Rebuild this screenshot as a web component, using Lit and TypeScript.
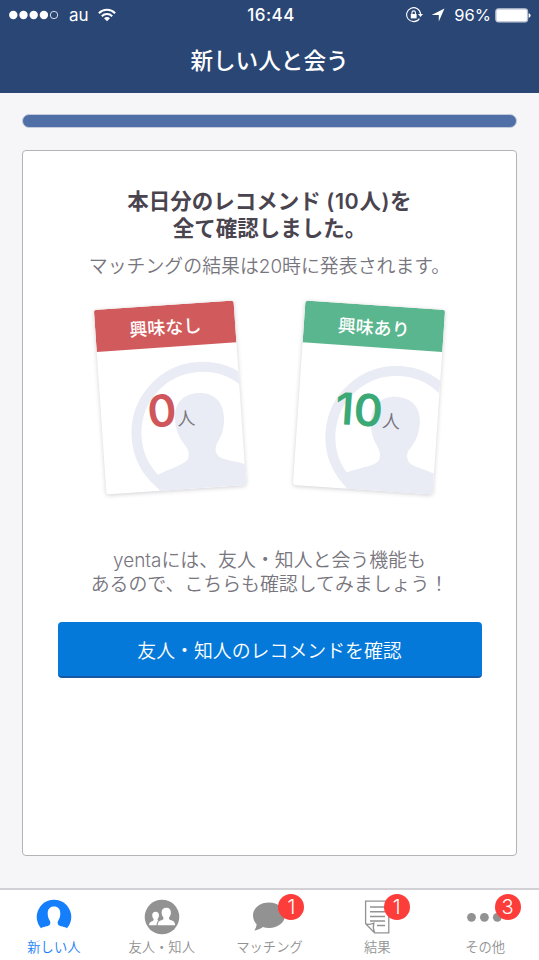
import { LitElement, html, css, svg } from "lit";
import { customElement, property } from "lit/decorators.js";

const SANS = css`Inter, "Noto Sans CJK JP", sans-serif`;

@customElement("status-bar")
class StatusBar extends LitElement {
  static styles = css`
    :host { display: flex; height: 30px; padding: 0 8px 0 9px; align-items: center; justify-content: space-between; color: #fff; font: 400 16.5px ${SANS}; box-sizing: border-box; }
    .side { display: flex; align-items: center; flex: 1; }
    .right { justify-content: flex-end; }
    .time { font-weight: 500; font-size: 17px; letter-spacing: 0.5px; padding-left: 2px; }
    .carrier { margin: 0 9px 0 10px; font-size: 17px; }
    .percent { margin: 0 4px 0 9px; }
    .arrow { margin-left: 8px; }
    svg { display: block; }
  `;
  render() {
    return html`
      <div class="side">
        <svg width="50" height="10" fill="#fff">
          ${[0, 1, 2, 3].map((i) => svg`<circle cx=${4.3 + i * 10.2} cy="5" r="4.2"/>`)}
          <circle cx="45" cy="5" r="3.7" fill="none" stroke="#fff" stroke-width=".8" />
        </svg>
        <span class="carrier">au</span>
        <svg width="18" height="14" viewBox="0 0 18 14" fill="none" stroke="#fff" stroke-width="2">
          <path d="M.9 5.2a11.4 11.4 0 0 1 16.2 0M3.8 8.2a7.3 7.3 0 0 1 10.4 0" />
          <path d="M9 13.2 6 10.2a4.2 4.2 0 0 1 6 0Z" fill="#fff" stroke="none" />
        </svg>
      </div>
      <span class="time">16:44</span>
      <div class="side right">
        <svg width="17" height="16" viewBox="0 0 17 16" fill="none" stroke="#fff" stroke-width="1.1">
          <path d="M13.4 11.6A7 7 0 1 1 14.6 7" />
          <path d="M12 7h5l-2.5 3Z" fill="#fff" stroke="none" />
          <path d="M4.8 7h5.8v4.4H4.8Z" fill="#fff" stroke="none" />
          <path d="M6 7.2V5.6a1.7 1.7 0 0 1 3.4 0v1.6" />
        </svg>
        <svg class="arrow" width="14" height="14" viewBox="0 0 14 14" fill="#fff"><path d="M13.5.5 7.8 13.4V6.9H.6Z" /></svg>
        <span class="percent">96%</span>
        <svg width="36" height="15" viewBox="0 0 36 15">
          <rect x=".7" y=".7" width="32" height="13.4" rx="2.4" fill="#9dabc5" stroke="#e6eaf1" stroke-width=".7" />
          <rect x="1.5" y="1.6" width="30.4" height="11.6" rx="1.6" fill="#fff" />
          <path d="M33.6 5.2q2 .5 2 2.3t-2 2.3Z" fill="#fff" />
        </svg>
      </div>
    `;
  }
}

@customElement("result-card")
class ResultCard extends LitElement {
  @property() label = "";
  @property() count = "";
  static styles = css`
    :host { display: block; width: 140px; height: 185px; border-radius: 3px; background: #fff; overflow: hidden; box-shadow: 0 1px 4px rgba(60, 60, 80, 0.24); font-family: ${SANS}; position: relative; --accent: #d15b5c; --number: #cf565b; transform: rotate(-3.9deg); }
    :host([positive]) { --accent: #5ab68e; --number: #3aa976; transform: rotate(3.9deg); }
    .head { display: flex; align-items: center; justify-content: center; height: 42px; background: var(--accent); color: #fff; font-size: 18px; font-weight: 500; }
    .figure { position: absolute; inset: 42px 0 0 0; }
    .total { position: relative; display: flex; align-items: baseline; justify-content: center; line-height: 50px; margin-top: 38px; }
    .number { color: var(--number); font-size: 44px; font-weight: 600; }
    .unit { color: #77757d; font-size: 18px; font-weight: 350; }
  `;
  render() {
    return html`
      <div class="head">${this.label}</div>
      <svg class="figure" width="140" height="143" viewBox="0 42 140 143" fill="#e9ecf5">
        <circle cx="100" cy="130" r="66" fill="none" stroke="#e9ecf5" stroke-width="10" />
        <path d="M98 90c15 0 24.500 9 24.500 25 0 14-5 21-9.500 28-2 4-1 9 2 12 6 5 22 6 32 12V200H58L49 171c11-7 28-9 34-15 3-4 2-9 0-13-4.500-7-9.500-14-9.500-28 0-16 9.500-25 24.500-25Z" />
      </svg>
      <div class="total"><span class="number">${this.count}</span><span class="unit">人</span></div>
    `;
  }
}

@customElement("tab-item")
class TabItem extends LitElement {
  @property() label = "";
  @property() icon = "";
  @property() badge = "";
  static styles = css`
    :host { display: flex; flex-direction: column; align-items: center; color: #929292; font: 400 13.3px ${SANS}; padding-top: 8.5px; }
    :host([active]) { color: #157efb; }
    .icon { position: relative; width: 36px; height: 36px; }
    svg { display: block; }
    .label { line-height: 20px; margin-top: 2px; font-weight: 350; white-space: nowrap; }
    .badge { position: absolute; left: 27px; top: -5px; width: 26px; height: 26px; border-radius: 50%; background: #fc3d39; color: #fff; font-size: 20px; font-weight: 300; line-height: 26px; text-align: center; }
    :host([icon="result"]) .badge { left: 24.500px; }
    :host([icon="more"]) .badge { left: 27.500px; }
  `;
  glyph() {
    switch (this.icon) {
      case "person":
        return svg`<circle cx="18" cy="18" r="17.3" fill="currentColor"/>
          <path fill="#fff" d="M18 7.600c4 0 6.300 2.700 6.300 6.900 0 3.500-1 5.400-2.100 7.200-.8 1.500-.8 3.200.2 4.200 1.700 1.500 6.500 1.600 9 3.400a16.400 16.400 0 0 1-26.800 0c2.500-1.800 7.300-1.900 9-3.400 1-1 1-2.700.2-4.200-1.100-1.800-2.100-3.700-2.100-7.200 0-4.200 2.300-6.900 6.300-6.900Z"/>`;
      case "people":
        return svg`<circle cx="18" cy="18" r="17.3" fill="currentColor"/>
          <path fill="#fff" d="M22.300 8.800c3 0 4.600 2 4.600 4.700 0 2.400-.8 3.500-1.600 4.700-.5.9-.3 1.900.3 2.400 1.700 1.200 5.500 1 5.500 5.600H13.700c0-4.600 3.600-4.400 5.200-5.600.6-.5.8-1.500.3-2.400-.8-1.200-1.600-2.300-1.600-4.700 0-2.700 1.700-4.700 4.700-4.700Z"/>
          <path fill="#fff" d="M11.600 12.800c2.200 0 3.400 1.400 3.400 3.500 0 1.700-.6 2.500-1.200 3.500-.4.7-.3 1.200.2 1.600l.4.300c-1.200 1-1.800 2.400-1.900 4.500H5.100c0-3.700 3-3.600 4.100-4.800.5-.5.6-.9.2-1.600-.6-1-1.200-1.800-1.200-3.500 0-2.100 1.200-3.500 3.400-3.500Z"/>`;
      case "chat":
        return svg`<path fill="currentColor" d="M18 3.500c9 0 16 5.600 16 12.700s-7 12.700-16 12.700c-2.200 0-4.200-.3-6-.9-2.500 1.800-5.400 3.100-8.800 3.400 1.500-2 2.200-3.800 2.400-6.200C3.200 22.900 2 19.700 2 16.200 2 9.100 9 3.500 18 3.500Z"/>`;
      case "result":
        return svg`<g fill="none" stroke="currentColor" stroke-width="1.300">
          <path d="M6.600 2.200H29.800V33.800H15.600L6.600 24.800ZM6.600 24.800c3 .8 5.800.6 8.200-.6-.8 3.400-.6 6.600.8 9.600"/>
          <path stroke-width="1.500" d="M11 8h15M11 12.800h15M11 17.400h15M11 21.900h15M18 26.500h8"/></g>`;
      default:
        return svg`<g fill="currentColor"><circle cx="4.500" cy="18.300" r="4.400"/><circle cx="17.400" cy="18.300" r="4.400"/><circle cx="30.300" cy="18.300" r="4.400"/></g>`;
    }
  }
  render() {
    return html`
      <div class="icon">
        <svg width="36" height="36" viewBox="0 0 36 36">${this.glyph()}</svg>
        ${this.badge ? html`<span class="badge">${this.badge}</span>` : ""}
      </div>
      <span class="label">${this.label}</span>
    `;
  }
}

@customElement("app-root")
class AppRoot extends LitElement {
  static styles = css`
    :host { display: flex; flex-direction: column; width: 539px; height: 960px; box-sizing: border-box; overflow: hidden; background: #f6f6f8; font-family: ${SANS}; }
    header { height: 93px; background: #2a4674; color: #fff; flex: none; }
    h1 { margin: 0; text-align: center; font-size: 22.6px; line-height: 62px; font-weight: 500; }
    .progress { flex: none; height: 12px; margin: 21px 22px 0; border: 1px solid #c3cbdc; border-radius: 7px; background: #4f6fa6; }
    main { flex: 1; margin: 22px 22px 32px; border: 1px solid #b4b4b8; border-radius: 4px; background: #fff; display: flex; flex-direction: column; align-items: center; text-align: center; }
    p { margin: 0; white-space: nowrap; color: #77757d; font-weight: 350; }
    h2 { margin: 37px 0 0; color: #4a444f; font-size: 21.5px; font-weight: 600; line-height: 27px; white-space: nowrap; }
    .amount { letter-spacing: 0.6px; }
    .note { font-size: 18.9px; line-height: 28px; margin-top: 11px; }
    .cards { display: flex; gap: 59px; margin-top: 24px; }
    .hint { font-size: 18.9px; line-height: 24px; margin-top: 59px; }
    button { width: 424px; height: 56px; margin-top: 25px; border: 0; border-bottom: 2px solid #1757a3; border-radius: 4px; background: #0479d9; color: #fff; font: 350 18.9px ${SANS}; padding: 0; }
    nav { flex: none; height: 72px; box-sizing: border-box; border-top: 2px solid #d2d2d6; background: #fff; display: grid; grid-template-columns: repeat(5, 1fr); }
  `;
  render() {
    return html`
      <header><status-bar></status-bar><h1>新しい人と会う</h1></header>
      <div class="progress"></div>
      <main>
        <h2>本日分のレコメンド <span class="amount">(10人)</span>を<br />全て確認しました。</h2>
        <p class="note">マッチングの結果は20時に発表されます。</p>
        <div class="cards">
          <result-card label="興味なし" count="0"></result-card>
          <result-card label="興味あり" count="10" positive></result-card>
        </div>
        <p class="hint">yentaには、友人・知人と会う機能も<br />あるので、こちらも確認してみましょう！</p>
        <button>友人・知人のレコメンドを確認</button>
      </main>
      <nav>
        <tab-item icon="person" label="新しい人" active></tab-item>
        <tab-item icon="people" label="友人・知人"></tab-item>
        <tab-item icon="chat" label="マッチング" badge="1"></tab-item>
        <tab-item icon="result" label="結果" badge="1"></tab-item>
        <tab-item icon="more" label="その他" badge="3"></tab-item>
      </nav>
    `;
  }
}
